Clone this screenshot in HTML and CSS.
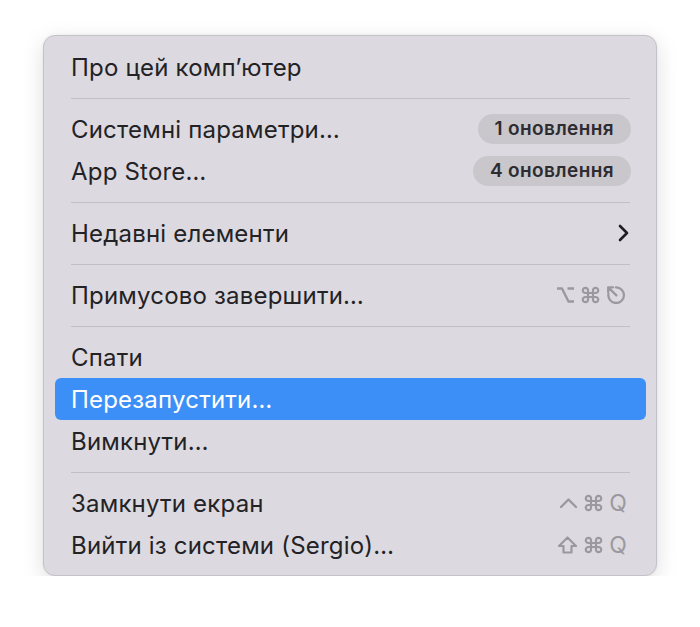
FILE: index.html
```html
<!DOCTYPE html>
<html lang="uk">
<head>
  <meta charset="UTF-8" />
  <title>Apple menu</title>
  <link rel="stylesheet" href="styles.css">
</head>
<body>
  <div class="menu">
    <div class="item"><span class="label">Про цей комп’ютер</span></div>
    <div class="sep"></div>
    <div class="item">
      <span class="label">Системні параметри…</span>
      <span class="badge">1 оновлення</span>
    </div>
    <div class="item">
      <span class="label">App Store…</span>
      <span class="badge">4 оновлення</span>
    </div>
    <div class="sep"></div>
    <div class="item">
      <span class="label">Недавні елементи</span>
      <svg class="chevron" width="12" height="18" viewBox="0 0 12 18">
        <path d="M3 2 L10 9 L3 16" fill="none" stroke="#1e1e20" stroke-width="2.6" stroke-linecap="round" stroke-linejoin="round"/>
      </svg>
    </div>
    <div class="sep"></div>
    <div class="item">
      <span class="label">Примусово завершити…</span>
      <span class="keys">
        <!-- option -->
        <svg width="19" height="18" viewBox="0 0 19 18">
          <path d="M1 2.5 H6 L12.5 15.5 H18 M11.5 2.5 H18" fill="none" stroke="#9b999f" stroke-width="2.4" stroke-linejoin="round"/>
        </svg>
        <!-- command -->
        <svg width="19" height="18" viewBox="0 0 19 18">
          <path d="M7 7 V4.5 A2.6 2.6 0 1 0 4.4 7 H14.6 A2.6 2.6 0 1 0 12 4.5 V13.5 A2.6 2.6 0 1 0 14.6 11 H4.4 A2.6 2.6 0 1 0 7 13.5 Z" fill="none" stroke="#9b999f" stroke-width="2.2"/>
        </svg>
        <!-- escape -->
        <svg width="21" height="18" viewBox="0 0 21 18">
          <path d="M10 1.4 A7.8 7.8 0 1 1 2.4 8.2" fill="none" stroke="#9b999f" stroke-width="2.3" stroke-linecap="round"/>
          <path d="M2.2 6.2 V1.3 H7.1 M2.6 1.7 L10.4 9.4" fill="none" stroke="#9b999f" stroke-width="2.3" stroke-linecap="round" stroke-linejoin="round"/>
        </svg>
      </span>
    </div>
    <div class="sep"></div>
    <div class="item"><span class="label">Спати</span></div>
    <div class="item active"><span class="label">Перезапустити…</span></div>
    <div class="item"><span class="label">Вимкнути…</span></div>
    <div class="sep"></div>
    <div class="item">
      <span class="label">Замкнути екран</span>
      <span class="keys">
        <!-- control -->
        <svg width="19" height="18" viewBox="0 0 19 18">
          <path d="M2 13 L9.5 5.5 L17 13" fill="none" stroke="#9b999f" stroke-width="2.4" stroke-linecap="round" stroke-linejoin="round"/>
        </svg>
        <svg width="19" height="18" viewBox="0 0 19 18">
          <path d="M7 7 V4.5 A2.6 2.6 0 1 0 4.4 7 H14.6 A2.6 2.6 0 1 0 12 4.5 V13.5 A2.6 2.6 0 1 0 14.6 11 H4.4 A2.6 2.6 0 1 0 7 13.5 Z" fill="none" stroke="#9b999f" stroke-width="2.2"/>
        </svg>
        <span class="key">Q</span>
      </span>
    </div>
    <div class="item">
      <span class="label">Вийти із системи (Sergio)…</span>
      <span class="keys">
        <!-- shift -->
        <svg width="21" height="18" viewBox="0 0 21 18">
          <path d="M10.5 1.5 L19 10 L14.5 10 L14.5 16.5 L6.5 16.5 L6.5 10 L2 10 Z" fill="none" stroke="#9b999f" stroke-width="2.2" stroke-linejoin="round"/>
        </svg>
        <svg width="19" height="18" viewBox="0 0 19 18">
          <path d="M7 7 V4.5 A2.6 2.6 0 1 0 4.4 7 H14.6 A2.6 2.6 0 1 0 12 4.5 V13.5 A2.6 2.6 0 1 0 14.6 11 H4.4 A2.6 2.6 0 1 0 7 13.5 Z" fill="none" stroke="#9b999f" stroke-width="2.2"/>
        </svg>
        <span class="key">Q</span>
      </span>
    </div>
  </div>
</body>
</html>
```

FILE: styles.css
```css
body {
  margin: 0;
  background: #ffffff;
  font-family: Inter, "Liberation Sans", sans-serif;
  color: #232225;
}
.menu {
  margin: 35px 0 0 43px;
  padding: 10px 10px 11px 11px;
  box-sizing: border-box;
  width: 614px;
  height: 541px;
  background: #dcd9e0;
  border: 1px solid #c4c2c8;
  border-radius: 12px;
  box-shadow: 0 6px 22px rgba(0, 0, 0, 0.13), 0 0 3px rgba(0, 0, 0, 0.06);
}
.item {
  height: 42px;
  display: flex;
  align-items: center;
  justify-content: space-between;
  padding: 0 19px 0 16px;
  border-radius: 6px;
  font-size: 24px;
  letter-spacing: 0.2px;
}
.item.active {
  background: #3d8ff8;
  color: #ffffff;
}
.sep {
  height: 1px;
  margin: 10px 16px 9px 16px;
  background: #c2c0c5;
}
.badge {
  background: #c9c6cc;
  border-radius: 15px;
  padding: 0 17px;
  height: 30px;
  line-height: 30px;
  font-size: 19px;
  font-weight: 600;
  color: #2d2c30;
  margin-right: -4px;
  letter-spacing: 0.4px;
}
.chevron {
  margin-right: -2px;
}
.keys {
  display: flex;
  align-items: center;
  gap: 6px;
  color: #9b999f;
  font-size: 23px;
}
.key {
  display: inline-block;
  line-height: 1;
}
```
